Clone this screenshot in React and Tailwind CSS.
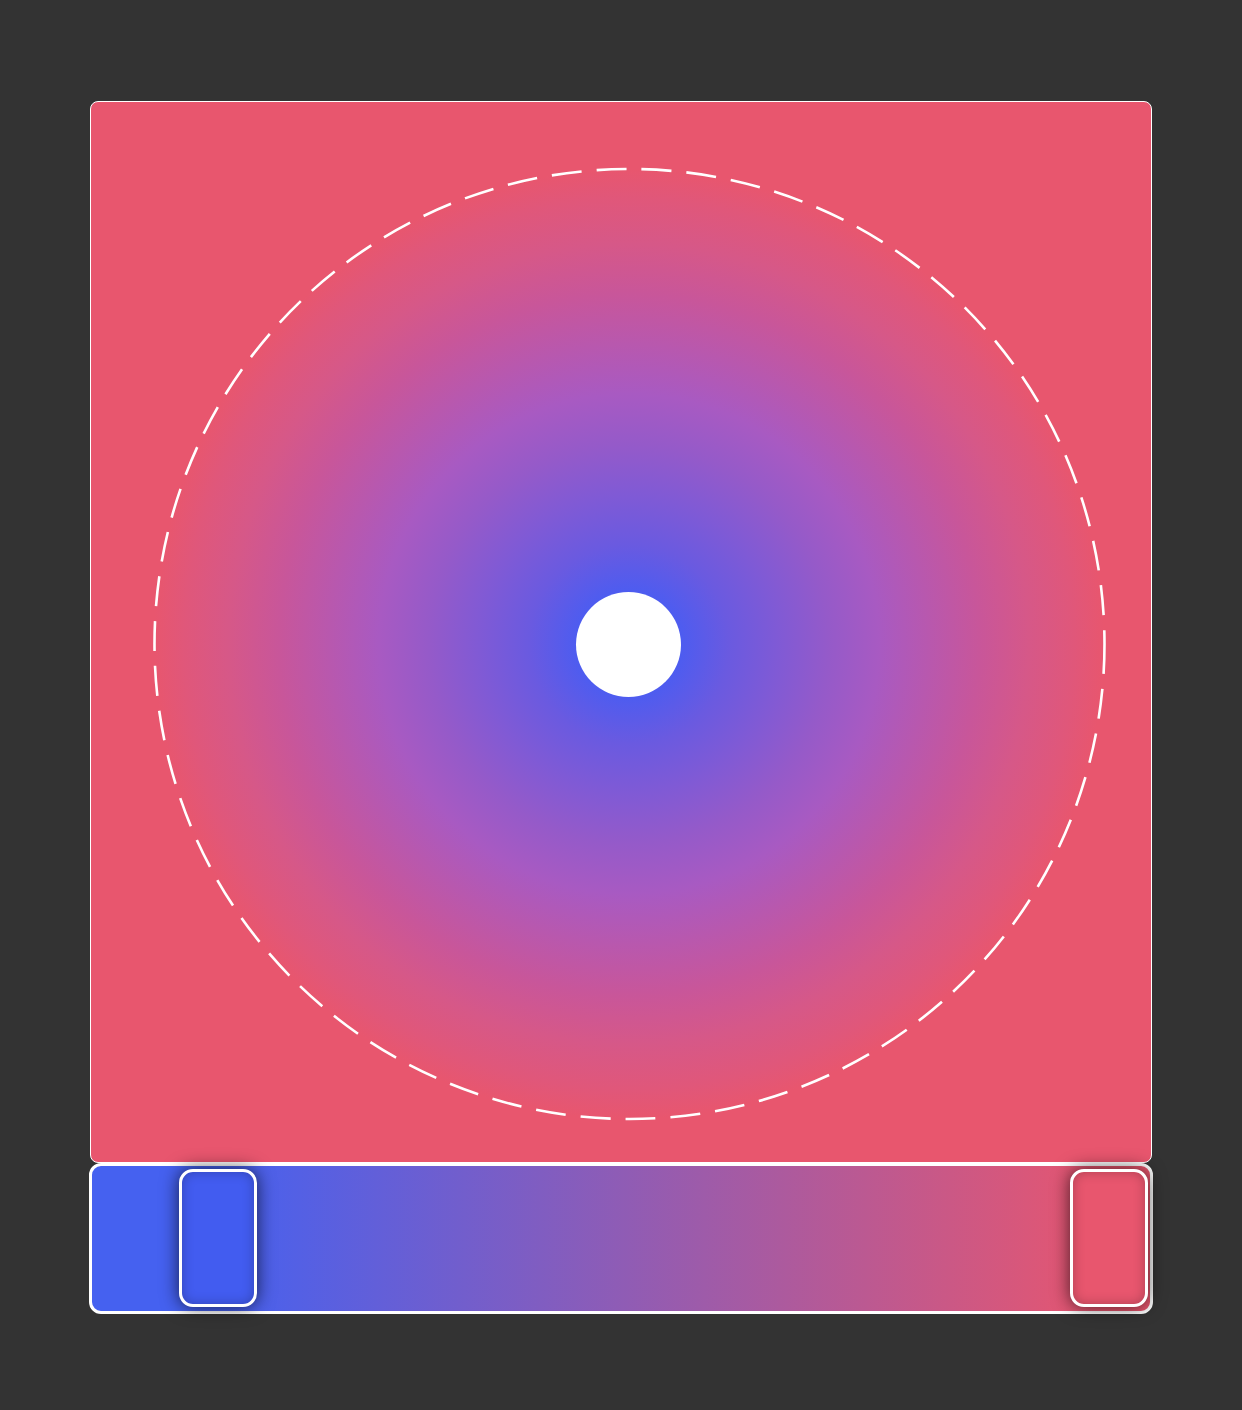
import React from "react";

export default function App() {
  return (
    <div className="min-h-[1410px] w-full bg-[#333333] flex flex-col items-center pt-[101px]">
      <div className="w-[1062px] relative h-[1062px] rounded-lg border border-white overflow-hidden bg-[radial-gradient(circle_at_538px_542px,#4a5cf1_0px,#4d5cf0_52px,#6a5ae0_100px,#805ad5_150px,#955ac9_200px,#a85ac2_250px,#b858ae_300px,#c8569a_350px,#d65888_400px,#e0577a_445px,#e8566e_475px)]">
        <svg className="absolute inset-0" width="1060" height="1060" viewBox="0 0 1060 1060">
          <circle cx="538.5" cy="542" r="475" fill="none" stroke="white" strokeWidth="2.6" strokeDasharray="30 15" />
        </svg>
        <div className="absolute left-[485px] top-[490px] w-[105px] h-[105px] rounded-full bg-white" />
      </div>
      <div className="relative w-[1064px] h-[151px] rounded-xl border-[3px] border-white bg-[linear-gradient(to_right,#4561f0_126px,#e8566e_1017px)]">
        <div className="absolute left-[87px] top-[3px] w-[78px] h-[138px] rounded-[14px] border-[3px] border-white bg-[#425cf0] shadow-[0_0_18px_rgba(0,0,0,0.7),inset_0_0_12px_rgba(0,0,0,0.25)]" />
        <div className="absolute left-[978px] top-[3px] w-[78px] h-[138px] rounded-[14px] border-[3px] border-white bg-[#e8566e] shadow-[0_0_18px_rgba(0,0,0,0.7),inset_0_0_12px_rgba(0,0,0,0.25)]" />
      </div>
    </div>
  );
}
